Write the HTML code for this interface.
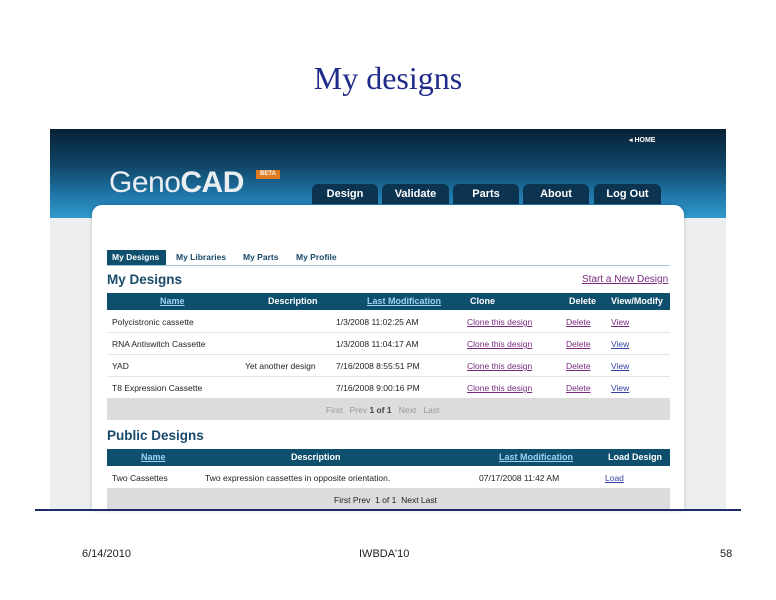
<!DOCTYPE html><html><head><style>
body{margin:0;width:776px;height:600px;background:#fff;position:relative;overflow:hidden;font-family:"Liberation Sans",Arial,sans-serif}
.a{position:absolute;white-space:nowrap}
.tab{position:absolute;top:184px;height:20px;background:#0c3350;color:#fff;font-weight:bold;font-size:11px;text-align:center;line-height:21px;border-radius:6px 6px 0 0}
.th{position:absolute;color:#fff;font-size:9px;font-weight:bold;line-height:17px}
.th u{color:#9fd3f0}
.td{position:absolute;font-size:8.5px;color:#222}
.lk{color:#7a2b7f;text-decoration:underline}
.lb{color:#3340a8;text-decoration:underline}
</style></head><body>
<div class="a" style="left:0;top:60px;width:776px;text-align:center;font-family:'Liberation Serif',serif;font-size:32px;color:#1f2a8a">My designs</div>
<div class="a" style="left:50px;top:129px;width:676px;height:381px;background:#eceeef"></div>
<div class="a" style="left:50px;top:129px;width:676px;height:89px;background:linear-gradient(180deg,#082236 0%,#0f4466 40%,#1f78aa 75%,#3399cc 100%)"></div>
<div class="a" style="left:629px;top:136px;color:#fff;font-size:7px;font-weight:bold">◂ HOME</div>
<div class="a" style="left:109px;top:166px;color:#e8eef2;font-size:30px;letter-spacing:-0.5px">Geno<b>CAD</b></div>
<div class="a" style="left:256px;top:170px;width:24px;height:9px;background:#e07a20;color:#fff;font-size:6px;font-weight:bold;text-align:center;line-height:9px">BETA</div>
<div class="tab" style="left:312px;width:66px">Design</div>
<div class="tab" style="left:382px;width:67px">Validate</div>
<div class="tab" style="left:453px;width:66px">Parts</div>
<div class="tab" style="left:523px;width:66px">About</div>
<div class="tab" style="left:594px;width:67px">Log Out</div>
<div class="a" style="left:92px;top:205px;width:592px;height:305px;background:#fff;border-radius:10px 10px 0 0;box-shadow:0 0 4px rgba(0,0,0,.2)"></div>
<div class="a" style="left:107px;top:250px;width:59px;height:15px;background:#0e4f6e"></div>
<div class="a" style="left:112px;top:252px;font-size:8.5px;font-weight:bold;color:#fff">My Designs</div>
<div class="a" style="left:176px;top:252px;font-size:8.5px;font-weight:bold;color:#1a4a6a">My Libraries</div>
<div class="a" style="left:243px;top:252px;font-size:8.5px;font-weight:bold;color:#1a4a6a">My Parts</div>
<div class="a" style="left:296px;top:252px;font-size:8.5px;font-weight:bold;color:#1a4a6a">My Profile</div>
<div class="a" style="left:107px;top:265px;width:563px;height:1px;background:#9cc8dc"></div>
<div class="a" style="left:107px;top:272px;font-size:13.5px;font-weight:bold;color:#1a4a6a">My Designs</div>
<div class="a lk" style="left:582px;top:274px;font-size:10px">Start a New Design</div>
<div class="a" style="left:107px;top:293px;width:563px;height:17px;background:#0e4f6e"></div>
<div class="th" style="left:160px;top:293px"><u>Name</u></div>
<div class="th" style="left:268px;top:293px">Description</div>
<div class="th" style="left:367px;top:293px"><u>Last Modification</u></div>
<div class="th" style="left:470px;top:293px">Clone</div>
<div class="th" style="left:569px;top:293px">Delete</div>
<div class="th" style="left:611px;top:293px">View/Modify</div>
<div class="a" style="left:107px;top:332px;width:563px;height:1px;background:#e4e4e4"></div>
<div class="a" style="left:107px;top:354px;width:563px;height:1px;background:#e4e4e4"></div>
<div class="a" style="left:107px;top:376px;width:563px;height:1px;background:#e4e4e4"></div>
<div class="td" style="left:112px;top:317px">Polycistronic cassette</div>
<div class="td" style="left:112px;top:339px">RNA Antiswitch Cassette</div>
<div class="td" style="left:112px;top:361px">YAD</div>
<div class="td" style="left:112px;top:383px">T8 Expression Cassette</div>
<div class="td" style="left:245px;top:361px">Yet another design</div>
<div class="td" style="left:336px;top:317px">1/3/2008 11:02:25 AM</div>
<div class="td" style="left:336px;top:339px">1/3/2008 11:04:17 AM</div>
<div class="td" style="left:336px;top:361px">7/16/2008 8:55:51 PM</div>
<div class="td" style="left:336px;top:383px">7/16/2008 9:00:16 PM</div>
<div class="td lk" style="left:467px;top:317px">Clone this design</div>
<div class="td lk" style="left:467px;top:339px">Clone this design</div>
<div class="td lk" style="left:467px;top:361px">Clone this design</div>
<div class="td lk" style="left:467px;top:383px">Clone this design</div>
<div class="td lk" style="left:566px;top:317px">Delete</div>
<div class="td lk" style="left:566px;top:339px">Delete</div>
<div class="td lk" style="left:566px;top:361px">Delete</div>
<div class="td lk" style="left:566px;top:383px">Delete</div>
<div class="td lk" style="left:611px;top:317px">View</div>
<div class="td lb" style="left:611px;top:339px">View</div>
<div class="td lb" style="left:611px;top:361px">View</div>
<div class="td lb" style="left:611px;top:383px">View</div>
<div class="a" style="left:107px;top:398px;width:563px;height:22px;background:#dcdcdc"></div>
<div class="td" style="left:326px;top:405px;color:#999">First &nbsp; Prev <b style="color:#444">1 of 1</b> &nbsp; Next &nbsp; Last</div>
<div class="a" style="left:107px;top:428px;font-size:13.5px;font-weight:bold;color:#1a4a6a">Public Designs</div>
<div class="a" style="left:107px;top:449px;width:563px;height:17px;background:#0e4f6e"></div>
<div class="th" style="left:141px;top:449px"><u>Name</u></div>
<div class="th" style="left:291px;top:449px">Description</div>
<div class="th" style="left:499px;top:449px"><u>Last Modification</u></div>
<div class="th" style="left:608px;top:449px">Load Design</div>
<div class="td" style="left:112px;top:473px">Two Cassettes</div>
<div class="td" style="left:205px;top:473px">Two expression cassettes in opposite orientation.</div>
<div class="td" style="left:479px;top:473px">07/17/2008 11:42 AM</div>
<div class="td lb" style="left:605px;top:473px">Load</div>
<div class="a" style="left:107px;top:488px;width:563px;height:22px;background:#dcdcdc"></div>
<div class="td" style="left:334px;top:495px">First Prev &nbsp;1 of 1 &nbsp;Next Last</div>
<div class="a" style="left:35px;top:509px;width:706px;height:2px;background:#1a2a6a"></div>
<div class="a" style="left:82px;top:548px;font-size:11px;color:#222">6/14/2010</div>
<div class="a" style="left:359px;top:548px;font-size:11px;color:#222">IWBDA'10</div>
<div class="a" style="left:720px;top:548px;font-size:11px;color:#222">58</div>
</body></html>
